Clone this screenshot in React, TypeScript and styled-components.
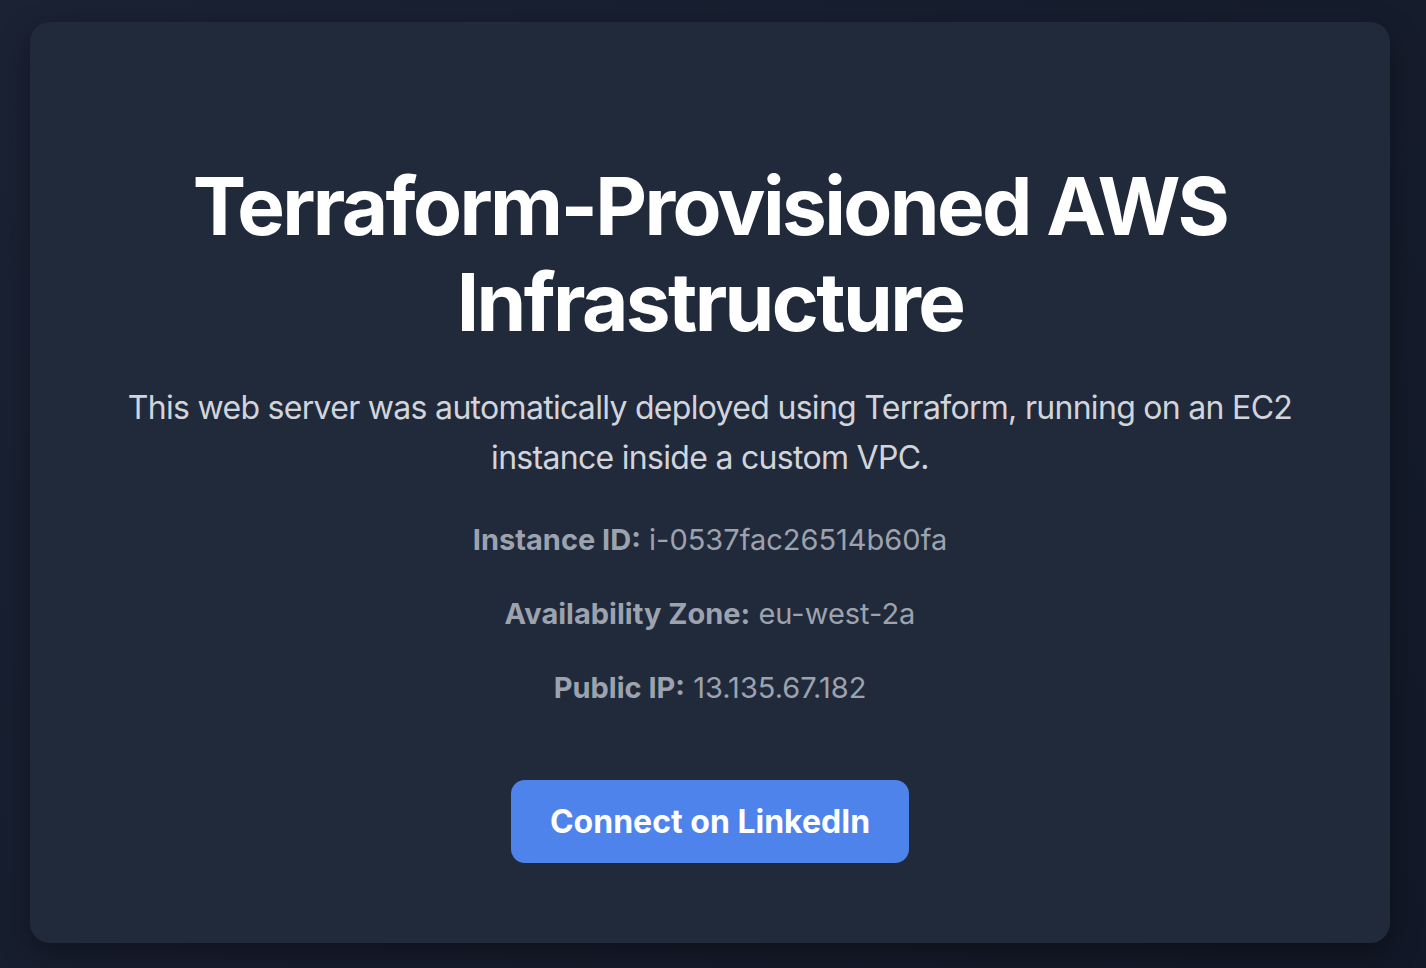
import styled, { createGlobalStyle } from 'styled-components'

const GlobalStyle = createGlobalStyle`
  html, body {
    margin: 0;
    padding: 0;
    height: 100%;
  }
  body {
    font-family: Inter, "Noto Sans", "Liberation Sans", sans-serif;
    background: linear-gradient(135deg, #1b2234 0%, #161d2d 50%, #121827 100%);
    min-height: 968px;
  }
`

const details = [
  { label: 'Instance ID:', value: 'i-0537fac26514b60fa' },
  { label: 'Availability Zone:', value: 'eu-west-2a' },
  { label: 'Public IP:', value: '13.135.67.182' },
]

export default function App() {
  return (
    <>
      <GlobalStyle />
      <Page>
        <Card>
          <Title>Terraform-Provisioned AWS Infrastructure</Title>
          <Intro>
            This web server was automatically deployed using Terraform, running on an EC2 instance inside a
            custom VPC.
          </Intro>
          <DetailList>
            {details.map((d) => (
              <DetailRow key={d.label}>
                <strong>{d.label}</strong> {d.value}
              </DetailRow>
            ))}
          </DetailList>
          <LinkButton href="#">Connect on LinkedIn</LinkButton>
        </Card>
      </Page>
    </>
  )
}

const Page = styled.div`
  box-sizing: border-box;
  min-height: 968px;
  padding: 22px 36px 25px 30px;
  display: flex;
`

const Card = styled.main`
  flex: 1;
  box-sizing: border-box;
  height: 921px;
  background: #212a3b;
  border-radius: 20px;
  box-shadow: 0 10px 30px rgba(0, 0, 0, 0.35);
  padding: 136px 64px 80px;
  display: flex;
  flex-direction: column;
  align-items: center;
  text-align: center;
`

const Title = styled.h1`
  margin: 0;
  font-size: 80px;
  line-height: 96px;
  font-weight: 700;
  color: #ffffff;
  letter-spacing: -2.6px;
  max-width: 1100px;
`

const Intro = styled.p`
  margin: 33px 0 0;
  font-size: 32px;
  line-height: 50px;
  color: #d1d5db;
  letter-spacing: -0.7px;
`

const DetailList = styled.div`
  margin-top: 36px;
  display: flex;
  flex-direction: column;
  gap: 32px;
`

const DetailRow = styled.p`
  margin: 0;
  font-size: 29px;
  line-height: 42px;
  color: #9ca3af;

  strong {
    font-weight: 700;
  }
`

const LinkButton = styled.a`
  margin-top: 71px;
  display: inline-block;
  background: #4f83ec;
  color: #ffffff;
  text-decoration: none;
  font-size: 32px;
  font-weight: 700;
  line-height: 39px;
  padding: 22px 39px;
  border-radius: 14px;
`
